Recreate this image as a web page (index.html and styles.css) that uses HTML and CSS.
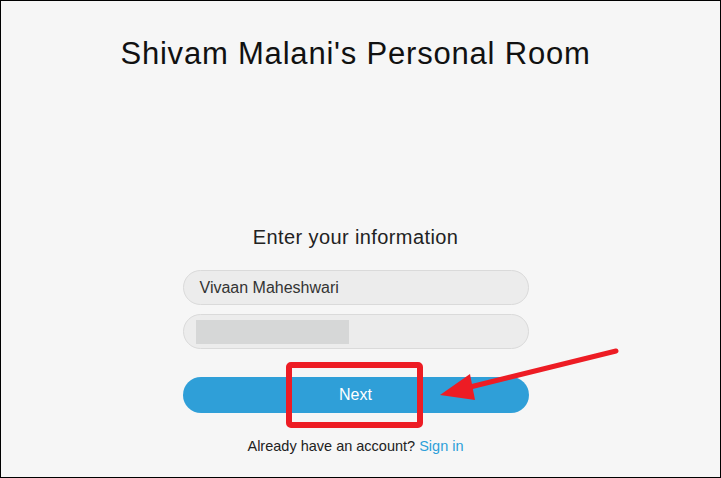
FILE: index.html
```html
<!DOCTYPE html>
<html>
<head>
<meta charset="utf-8">
<link rel="stylesheet" href="styles.css">
</head>
<body>
<div class="frame">
  <h1 class="title">Shivam Malani's Personal Room</h1>
  <div class="form">
    <h2 class="heading">Enter your information</h2>
    <div class="field"><span class="field-text">Vivaan Maheshwari</span></div>
    <div class="field field-masked"><span class="mask"></span></div>
    <button class="next">Next</button>
    <p class="signin">Already have an account? <a class="signin-link">Sign in</a></p>
  </div>
  <svg class="annot" width="721" height="478" viewBox="0 0 721 478">
    <rect x="289" y="365" width="131" height="60" rx="2" fill="none" stroke="#ed1c24" stroke-width="6"/>
    <line x1="616" y1="351" x2="462" y2="389" stroke="#ed1c24" stroke-width="5" stroke-linecap="round"/>
    <polygon points="440,395 470,374 475,400" fill="#ed1c24"/>
  </svg>
</div>
</body>
</html>
```
FILE: styles.css
```css
* { box-sizing: border-box; }
html, body { margin: 0; padding: 0; }
body {
  font-family: "Liberation Sans", Arial, sans-serif;
  background: #ffffff;
}
.frame {
  position: relative;
  width: 721px;
  height: 478px;
  border: 1px solid #000;
  background: #f6f6f6;
  display: flex;
  flex-direction: column;
  align-items: center;
  padding-right: 10px;
  overflow: hidden;
}
.title {
  margin: 35px 0 0 0;
  font-size: 31px;
  line-height: 36px;
  letter-spacing: 0.8px;
  font-weight: normal;
  color: #111;
}
.form {
  margin-top: 153px;
  width: 346px;
  display: flex;
  flex-direction: column;
  align-items: stretch;
}
.heading {
  margin: 0 0 21px 0;
  text-align: center;
  font-size: 20px;
  line-height: 24px;
  letter-spacing: 0.4px;
  font-weight: normal;
  color: #222;
}
.field {
  height: 35px;
  border: 1px solid #dadada;
  border-radius: 18px;
  background: #ececec;
  display: flex;
  align-items: center;
  padding-left: 16px;
  margin-bottom: 9px;
}
.field-text {
  font-size: 16px;
  color: #333;
}
.field-masked { padding-left: 12px; }
.mask {
  width: 153px;
  height: 24px;
  background: #d6d7d7;
}
.next {
  margin-top: 19px;
  height: 36px;
  border: none;
  border-radius: 18px;
  background: #2f9fd8;
  color: #fff;
  font-family: inherit;
  font-size: 16px;
  padding: 0;
}
.signin {
  margin: 25px 0 0 0;
  text-align: center;
  font-size: 14.5px;
  color: #222;
}
.signin-link { color: #2d9fd9; }
.annot {
  position: absolute;
  left: -1px;
  top: -1px;
  pointer-events: none;
}
```
